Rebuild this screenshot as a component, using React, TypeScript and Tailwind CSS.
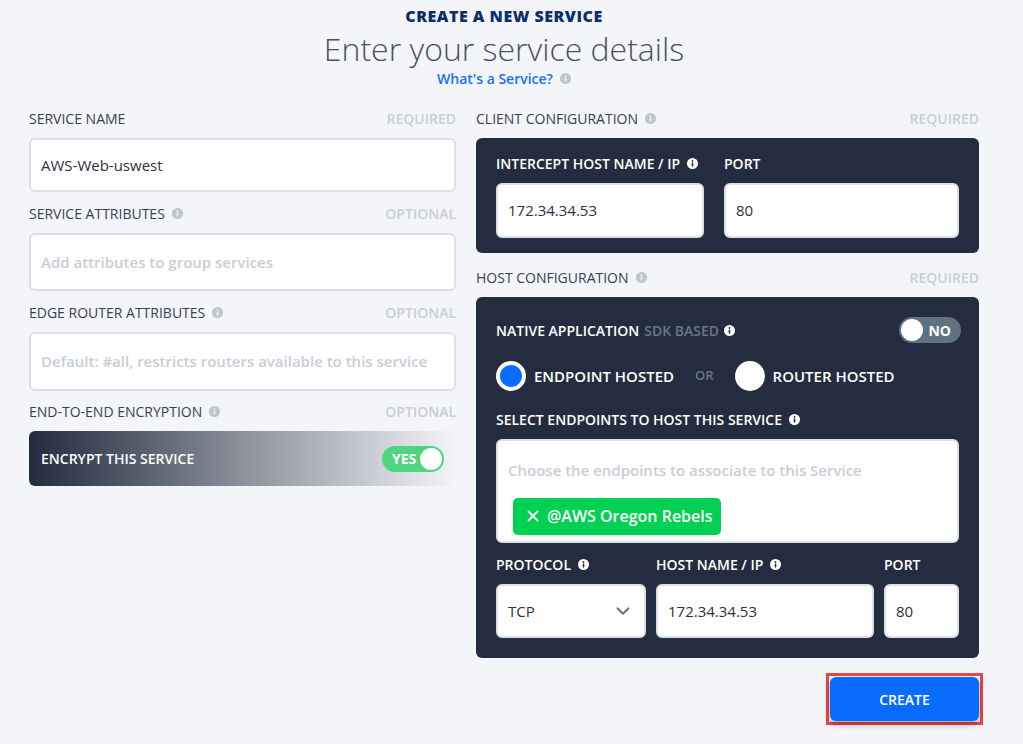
import { ChevronDown, X } from "lucide-react";

function InfoIcon({ light = false }: { light?: boolean }) {
  return (
    <svg width="11" height="11" viewBox="0 0 12 12" className="shrink-0">
      <circle cx="6" cy="6" r="6" fill={light ? "#ffffff" : "#bfc4cd"} />
      <rect x="5.1" y="5" width="1.8" height="4.2" rx="0.5" fill={light ? "#232d3f" : "#f4f5f9"} />
      <circle cx="6" cy="3.3" r="1" fill={light ? "#232d3f" : "#f4f5f9"} />
    </svg>
  );
}

function FieldLabel({ text, note, info }: { text: string; note: string; info?: boolean }) {
  return (
    <div className="flex h-5 items-center justify-between text-[14px] font-medium text-[#394055]">
      <div className="flex items-center gap-[7px]">
        <span>{text}</span>
        {info && <InfoIcon />}
      </div>
      <span className="font-semibold text-[#c9cdd6]">{note}</span>
    </div>
  );
}

function DarkLabel({ children, info }: { children: React.ReactNode; info?: boolean }) {
  return (
    <div className="flex h-5 items-center gap-[7px] text-[14px] font-semibold text-white">
      <span>{children}</span>
      {info && <InfoIcon light />}
    </div>
  );
}

function TextBox({ value, placeholder, h }: { value?: string; placeholder?: string; h: string }) {
  return (
    <div className={`flex ${h} items-center rounded-[6px] border-2 border-[#dcdfe5] bg-white px-[10px] text-[15px]`}>
      {value ? (
        <span className="font-medium text-[#2c3142]">{value}</span>
      ) : (
        <span className="font-semibold text-[#c9cdd6]">{placeholder}</span>
      )}
    </div>
  );
}

export default function App() {
  return (
    <div className="min-h-[744px] w-full bg-[#f4f5f9] font-['Open_Sans',sans-serif]">
      <div className="ml-[29px] w-[950px]">
        <div className="flex flex-col items-center pt-[6px]">
          <h2 className="text-[16px] font-extrabold uppercase leading-[20px] tracking-[0.5px] text-[#0d2d6b]">
            Create a new Service
          </h2>
          <h1 className="mt-[4px] text-[32px] font-light leading-[38px] text-[#4b5163]">Enter your service details</h1>
          <div className="flex h-5 items-center gap-[7px]">
            <span className="text-[14px] font-semibold text-[#1a6dff]">What's a Service?</span>
            <InfoIcon />
          </div>
        </div>

        <div className="mt-[20px] flex gap-[20px]">
          {/* left column */}
          <div className="flex w-[427px] flex-col">
            <FieldLabel text="SERVICE NAME" note="REQUIRED" />
            <div className="mt-[10px]">
              <TextBox value="AWS-Web-uswest" h="h-[54px]" />
            </div>
            <div className="mt-[11px]">
              <FieldLabel text="SERVICE ATTRIBUTES" note="OPTIONAL" info />
            </div>
            <div className="mt-[10px]">
              <TextBox placeholder="Add attributes to group services" h="h-[58px]" />
            </div>
            <div className="mt-[11px]">
              <FieldLabel text="EDGE ROUTER ATTRIBUTES" note="OPTIONAL" info />
            </div>
            <div className="mt-[10px]">
              <TextBox placeholder="Default: #all, restricts routers available to this service" h="h-[59px]" />
            </div>
            <div className="mt-[10px]">
              <FieldLabel text="END-TO-END ENCRYPTION" note="OPTIONAL" info />
            </div>
            <div className="mt-[10px] flex h-[55px] items-center justify-between rounded-[6px] bg-linear-to-r from-[#232d3f] via-[#8c919b] to-[#f4f5f9] px-[12px]">
              <span className="text-[14px] font-semibold text-white">ENCRYPT THIS SERVICE</span>
              <div className="flex h-[26px] w-[62px] items-center justify-between rounded-full bg-[#4fd480] pl-[10px] pr-[2px]">
                <span className="text-[14px] font-bold text-white">YES</span>
                <span className="h-[22px] w-[22px] rounded-full bg-white" />
              </div>
            </div>
          </div>

          {/* right column */}
          <div className="flex w-[503px] flex-col">
            <FieldLabel text="CLIENT CONFIGURATION" note="REQUIRED" info />
            <div className="mt-[10px] flex gap-[20px] rounded-[6px] bg-[#232d3f] px-[20px] py-[15px]">
              <div className="flex w-[208px] flex-col gap-[10px]">
                <DarkLabel info>INTERCEPT HOST NAME / IP</DarkLabel>
                <TextBox value="172.34.34.53" h="h-[55px]" />
              </div>
              <div className="flex flex-1 flex-col gap-[10px]">
                <DarkLabel>PORT</DarkLabel>
                <TextBox value="80" h="h-[55px]" />
              </div>
            </div>

            <div className="mt-[14px]">
              <FieldLabel text="HOST CONFIGURATION" note="REQUIRED" info />
            </div>
            <div className="mt-[10px] flex flex-col rounded-[6px] bg-[#232d3f] p-[20px]">
              <div className="flex h-[26px] items-center justify-between">
                <div className="flex items-center gap-[5px] text-[14px] font-semibold">
                  <span className="text-white">NATIVE APPLICATION</span>
                  <span className="text-[#66788a]">SDK BASED</span>
                  <InfoIcon light />
                </div>
                <div className="mr-[-2px] flex h-[26px] w-[62px] items-center justify-between rounded-full bg-[#5e7282] pl-[2px] pr-[10px]">
                  <span className="h-[22px] w-[22px] rounded-full bg-white" />
                  <span className="text-[14px] font-bold text-white">NO</span>
                </div>
              </div>

              <div className="mt-[18px] flex h-[30px] items-center">
                <span className="flex h-[30px] w-[30px] items-center justify-center rounded-full bg-white">
                  <span className="h-[22px] w-[22px] rounded-full bg-[#0a6cff]" />
                </span>
                <span className="ml-[8px] text-[15px] font-semibold text-white">ENDPOINT HOSTED</span>
                <span className="ml-[21px] text-[13px] font-semibold text-[#66788a]">OR</span>
                <span className="ml-[21px] h-[30px] w-[30px] rounded-full bg-white" />
                <span className="ml-[8px] text-[15px] font-semibold text-white">ROUTER HOSTED</span>
              </div>

              <div className="mt-[18px]">
                <DarkLabel info>SELECT ENDPOINTS TO HOST THIS SERVICE</DarkLabel>
              </div>
              <div className="mt-[10px] flex h-[104px] flex-col items-start rounded-[6px] border-2 border-[#dcdfe5] bg-white px-[10px] pt-[18px]">
                <span className="text-[15px] font-semibold text-[#c9cdd6]">Choose the endpoints to associate to this Service</span>
                <div className="ml-[5px] mt-[16px] flex h-[37px] items-center gap-[5px] whitespace-nowrap rounded-[5px] bg-[#00d152] pl-[11px] pr-[8px]">
                  <X className="h-[18px] w-[18px] text-white" strokeWidth={2.5} />
                  <span className="text-[16px] font-semibold text-white">@AWS Oregon Rebels</span>
                </div>
              </div>

              <div className="mt-[11px] flex gap-[10px]">
                <div className="flex w-[150px] flex-col gap-[10px]">
                  <DarkLabel info>PROTOCOL</DarkLabel>
                  <div className="flex h-[54px] items-center justify-between rounded-[6px] border-2 border-[#dcdfe5] bg-white px-[10px]">
                    <span className="text-[15px] font-medium text-[#2c3142]">TCP</span>
                    <ChevronDown className="h-[22px] w-[22px] text-[#5d7080]" strokeWidth={2} />
                  </div>
                </div>
                <div className="flex w-[218px] flex-col gap-[10px]">
                  <DarkLabel info>HOST NAME / IP</DarkLabel>
                  <TextBox value="172.34.34.53" h="h-[54px]" />
                </div>
                <div className="flex flex-1 flex-col gap-[10px]">
                  <DarkLabel>PORT</DarkLabel>
                  <TextBox value="80" h="h-[54px]" />
                </div>
              </div>
            </div>

            <div className="mt-[15px] flex justify-end">
              <div className="mr-[-4px] border-[3px] border-[#ef4444] p-[1px]">
                <button className="flex h-[44px] w-[149px] items-center justify-center rounded-[6px] bg-[#0a6cff] text-[14px] font-semibold text-white shadow-[0_3px_6px_rgba(0,0,0,0.35)]">
                  CREATE
                </button>
              </div>
            </div>
          </div>
        </div>
      </div>
    </div>
  );
}
